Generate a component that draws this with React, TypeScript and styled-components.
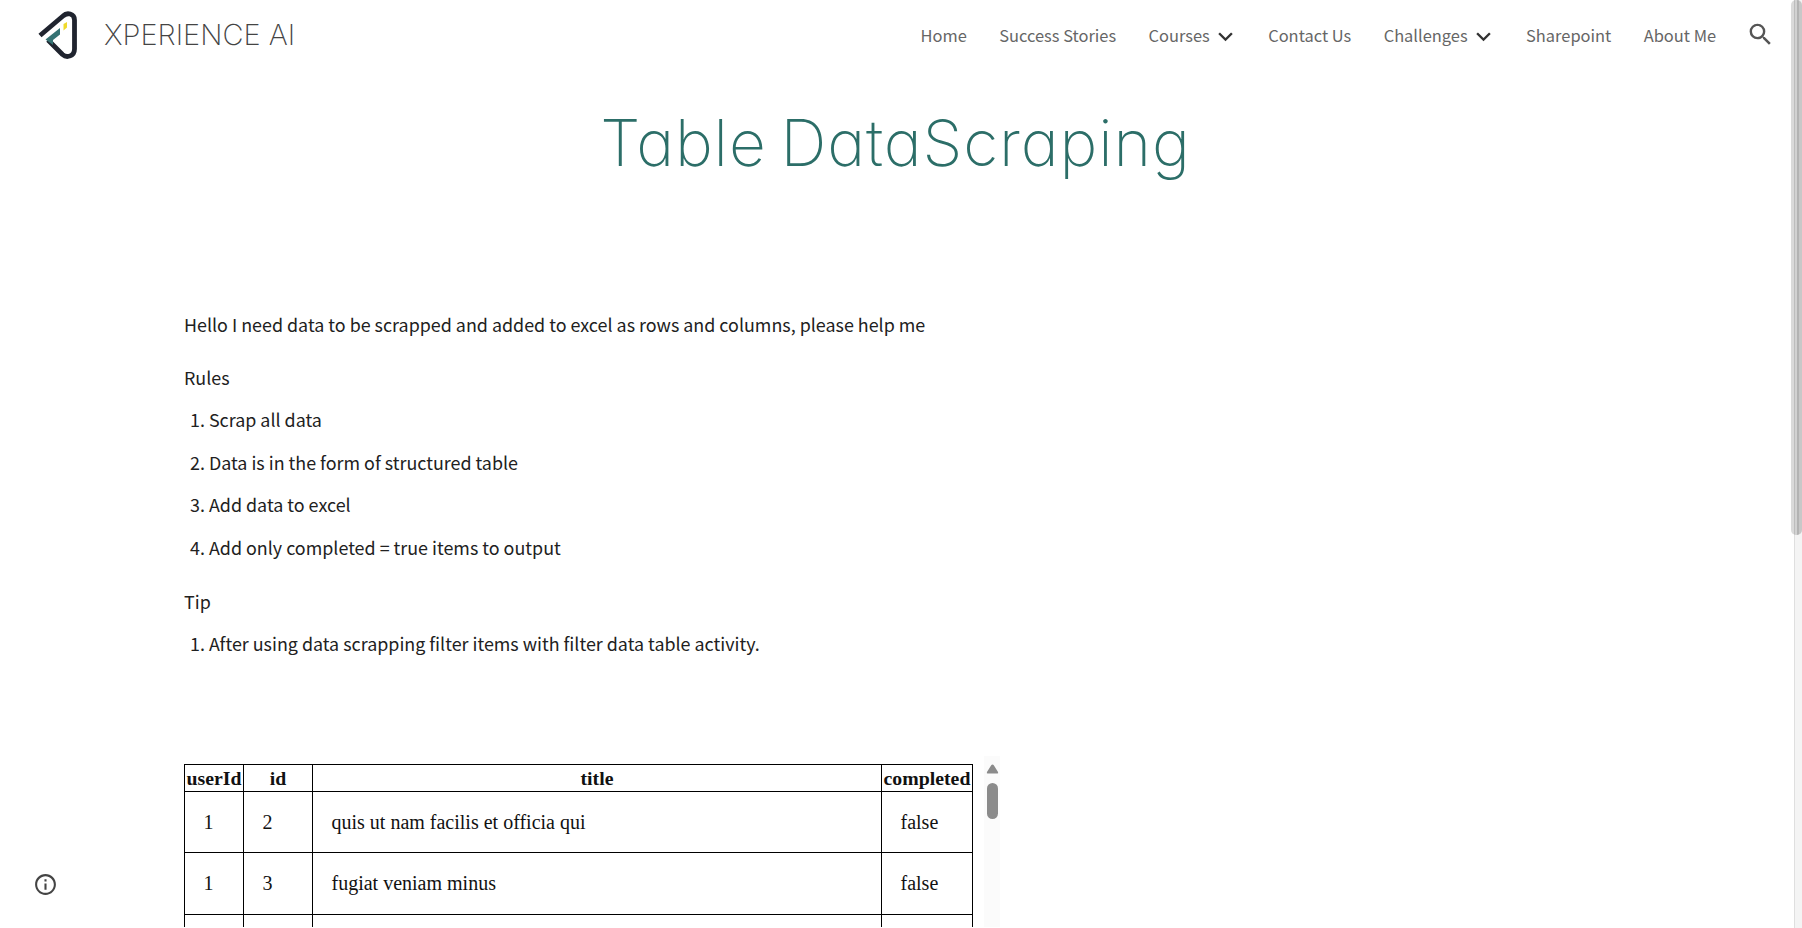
import React from "react";
import styled, { createGlobalStyle } from "styled-components";

const Global = createGlobalStyle`
  * { box-sizing: border-box; }
  html, body { margin: 0; padding: 0; background: #fff; overflow: hidden; }
`;
const sans = `"Noto Sans CJK SC", "Open Sans", sans-serif`;
const thin = `Inter, Lato, sans-serif`;

const Page = styled.div`
  display: flex;
  width: 1802px;
  height: 928px;
  overflow: hidden;
  font-family: ${sans};
  color: #212121;
`;
const Content = styled.div`
  flex: 1;
  min-width: 0;
  display: flex;
  flex-direction: column;
`;
const Header = styled.header`
  display: flex;
  align-items: center;
  justify-content: space-between;
  flex: none;
  height: 70px;
  padding: 0 16.5px 0 37px;
`;
const Brand = styled.a`
  display: flex;
  align-items: center;
  gap: 25px;
`;
const BrandName = styled.span`
  font: 200 29px/36px ${thin};
  color: #444;
  white-space: nowrap;
`;
const Nav = styled.nav`
  display: flex;
  align-items: center;
  gap: 32.4px;
  height: 70px;
`;
const NavItem = styled.a`
  display: flex;
  align-items: center;
  gap: 1.5px;
  font-size: 16.45px;
  line-height: 24px;
  color: #666;
  white-space: nowrap;
`;
const Chevron = styled.svg`
  width: 29px;
  height: 29px;
  margin: 3px -4.5px 0 0;
  fill: #333;
`;
const SearchIcon = styled.svg`
  width: 29px;
  height: 29px;
  margin: -1px 0 0 -3px;
  fill: #555;
`;
const Title = styled.h1`
  flex: none;
  margin: 33px 0 0;
  text-align: center;
  font: 200 64px/80px ${thin};
  font-feature-settings: "cv11";
  letter-spacing: 0.9px;
  word-spacing: -5px;
  color: #2c6e68;
  white-space: nowrap;
`;
const Article = styled.section`
  flex: none;
  padding: 126px 0 0 184px;
  font-size: 17.9px;
`;
const Para = styled.p<{ $top?: number }>`
  margin: ${(p) => p.$top ?? 0}px 0 0;
  line-height: 30px;
`;
const List = styled.ol`
  margin: 0;
  padding: 0 0 0 6px;
  list-style: none;
`;
const Item = styled.li`
  display: flex;
  gap: 4px;
  margin-top: 12.4px;
  line-height: 30px;
`;
const Frame = styled.div`
  display: flex;
  align-items: flex-start;
  flex: none;
  height: 171px;
  margin: 98px 0 0 184px;
  overflow: hidden;
`;
const Table = styled.table`
  width: 789px;
  margin-top: 8px;
  border-collapse: collapse;
  table-layout: fixed;
  font: 20px/22px "Liberation Serif", serif;
  color: #111;
`;
const Th = styled.th<{ $w: number }>`
  width: ${(p) => p.$w}px;
  height: 27px;
  padding: 0;
  border: 1px solid #000;
  font-size: 19.8px;
  white-space: nowrap;
  text-align: center;
`;
const Td = styled.td`
  height: 61.5px;
  padding: 0 0 1px 18.5px;
  border: 1px solid #000;
`;
const FrameBar = styled.div`
  display: flex;
  flex-direction: column;
  align-items: center;
  width: 16px;
  height: 171px;
  margin-left: 11px;
  padding: 8px 0 0 1px;
  background: #fbfbfb;
`;
const FrameThumb = styled.div`
  width: 11px;
  height: 36px;
  margin-top: 9px;
  border-radius: 6px;
  background: #8b8b8b;
`;
const PageBar = styled.div`
  display: flex;
  justify-content: flex-end;
  width: 11px;
  height: 928px;
  background: linear-gradient(to right, #fff 3px, #dfdfdf 3px 4px, #f4f4f4 4px);
`;
const PageThumb = styled.div`
  width: 11px;
  height: 535px;
  border-radius: 5px;
  background: linear-gradient(to right, #dadada 3px, #bdbdbd 3px 4px, #d2d2d2 4px 6px, #b3b3b3 6px 8px, #c8c8c8 8px);
`;
const Info = styled.svg`
  position: absolute;
  left: 33px;
  top: 872px;
  width: 25px;
  height: 25px;
  fill: #444;
`;

const links = [
  { label: "Home" },
  { label: "Success Stories" },
  { label: "Courses", menu: true },
  { label: "Contact Us" },
  { label: "Challenges", menu: true },
  { label: "Sharepoint" },
  { label: "About Me" },
];
const rules = [
  "Scrap all data",
  "Data is in the form of structured table",
  "Add data to excel",
  "Add only completed = true items to output",
];
const rows = [
  ["1", "2", "quis ut nam facilis et officia qui", "false"],
  ["1", "3", "fugiat veniam minus", "false"],
  ["", "", "", ""],
];

function Logo() {
  return (
    <svg width="42" height="50" viewBox="0 0 42 50" fill="none" strokeLinejoin="round">
      <path d="M3 25.500L26 6C30 2 37.500 3.500 37.500 10V39C37.500 46 30 48.500 25.500 44.500L11 30" stroke="#20242f" strokeWidth="4.800" />
      <path d="M8.500 29.500L23 18V24.500L16 30V35Z" fill="#347273" />
      <path d="M26.500 14L30 12V17.500L26.500 20.500Z" fill="#f0da2b" />
    </svg>
  );
}

export default function App() {
  return (
    <Page>
      <Global />
      <Content>
        <Header>
          <Brand>
            <Logo />
            <BrandName>XPERIENCE AI</BrandName>
          </Brand>
          <Nav>
            {links.map((l) => (
              <NavItem key={l.label}>
                {l.label}
                {l.menu && (
                  <Chevron viewBox="0 0 24 24">
                    <path d="M7.410 8.590L12 13.170l4.590-4.580L18 10l-6 6-6-6z" />
                  </Chevron>
                )}
              </NavItem>
            ))}
            <SearchIcon viewBox="0 0 24 24">
              <path d="M15.500 14h-.790l-.280-.270A6.470 6.470 0 0 0 16 9.500 6.500 6.500 0 1 0 9.500 16c1.610 0 3.090-.590 4.230-1.570l.270.280v.790l5 4.990L20.490 19l-4.990-5zm-6 0C7.010 14 5 11.990 5 9.500S7.010 5 9.500 5 14 7.010 14 9.500 11.990 14 9.500 14z" />
            </SearchIcon>
          </Nav>
        </Header>
        <Title>Table DataScraping</Title>
        <Article>
          <Para>Hello I need data to be scrapped and added to excel as rows and columns, please help me</Para>
          <Para $top={23}>Rules</Para>
          <List>
            {rules.map((r, i) => (
              <Item key={r}>
                <span>{i + 1}.</span>
                <span>{r}</span>
              </Item>
            ))}
          </List>
          <Para $top={24}>Tip</Para>
          <List>
            <Item>
              <span>1.</span>
              <span>After using data scrapping filter items with filter data table activity.</span>
            </Item>
          </List>
        </Article>
        <Frame>
          <Table>
            <thead>
              <tr>
                <Th $w={59}>userId</Th>
                <Th $w={69}>id</Th>
                <Th $w={569}>title</Th>
                <Th $w={91}>completed</Th>
              </tr>
            </thead>
            <tbody>
              {rows.map((r, n) => (
                <tr key={n}>
                  {r.map((c, i) => (
                    <Td key={i}>{c}</Td>
                  ))}
                </tr>
              ))}
            </tbody>
          </Table>
          <FrameBar>
            <svg width="13" height="10" viewBox="0 0 13 10" fill="#8b8b8b">
              <path d="M6.500 0.500Q7.300 0.500 7.800 1.300L12 8Q12.700 9.500 11.300 9.500H1.700Q0.300 9.500 1 8L5.200 1.300Q5.700 0.500 6.500 0.500Z" />
            </svg>
            <FrameThumb />
          </FrameBar>
        </Frame>
      </Content>
      <PageBar>
        <PageThumb />
      </PageBar>
      <Info viewBox="0 0 24 24">
        <path d="M11 7h2v2h-2zm0 4h2v6h-2zm1-9C6.480 2 2 6.480 2 12s4.480 10 10 10 10-4.480 10-10S17.520 2 12 2zm0 18c-4.410 0-8-3.590-8-8s3.590-8 8-8 8 3.590 8 8-3.590 8-8 8z" />
      </Info>
    </Page>
  );
}
